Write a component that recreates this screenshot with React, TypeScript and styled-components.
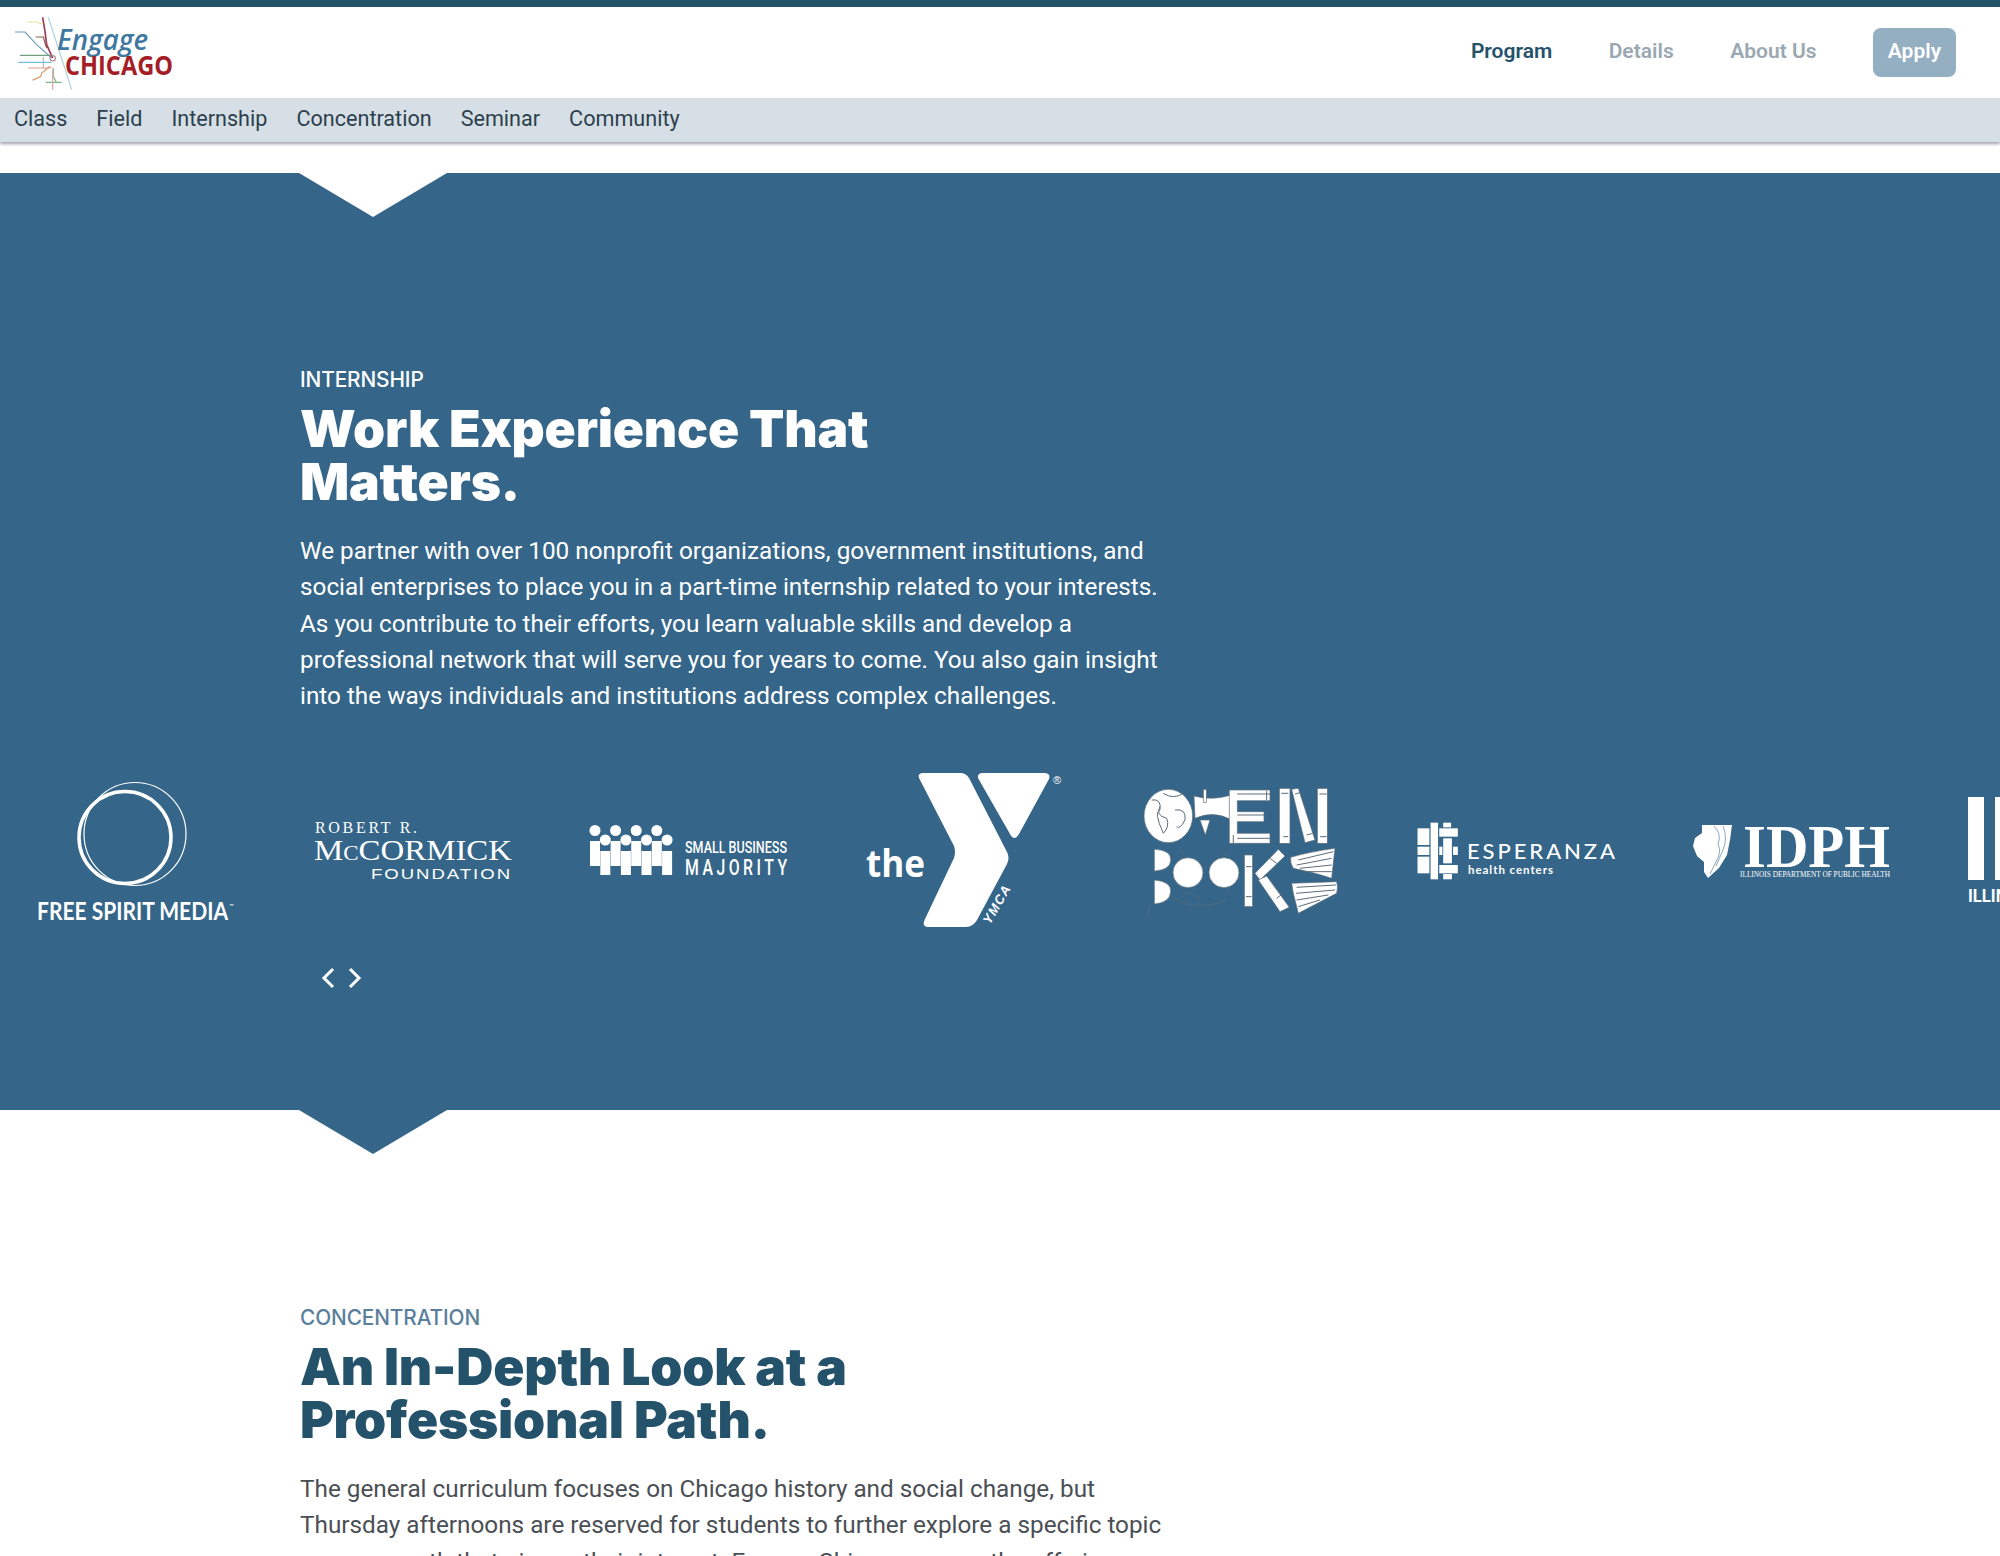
import React from 'react';
import styled, { createGlobalStyle } from 'styled-components';

const GlobalStyle = createGlobalStyle`
  html, body {
    margin: 0;
    padding: 0;
    background: #fff;
    overflow: hidden;
  }
  body {
    font-family: "Inter", "Liberation Sans", sans-serif;
    height: 1556px;
  }
`;

const sections = ['Class', 'Field', 'Internship', 'Concentration', 'Seminar', 'Community'];

const EngageLogo = () => (
  <svg width="176" height="84" viewBox="0 0 176 84">
    <g transform="translate(-12 -15) scale(0.3333)" fill="none" strokeWidth="3.5">
      <path d="M82 72 H110 Q120 76 125 78" stroke="#e8e39a" />
      <path d="M145 58 L215 275" stroke="#a8cfe4" />
      <path d="M45 102 H75 L110 140 L155 180" stroke="#6d9cc0" />
      <path d="M107 117 H130 L135 135 L140 150" stroke="#8b5a50" />
      <path d="M60 172 H155" stroke="#6f9e80" />
      <path d="M55 193 H155" stroke="#6fc0e2" />
      <path d="M85 210 H155" stroke="#e4a89c" />
      <path d="M130 178 V210" stroke="#b5b5b5" />
      <path d="M97 247 L122 236 L125 225 L150 205" stroke="#e09060" />
      <path d="M160 210 V235 L170 255 M137 253 H185" stroke="#7cb88c" />
      <path d="M158 215 V275" stroke="#e0a0b0" />
      <path d="M128 58 L135 100 L140 140 L158 180" stroke="#9c3a58" strokeWidth="5" />
      <circle cx="158" cy="181" r="8" stroke="#b08a90" />
    </g>
    <text x="45" y="37" fontFamily="'Open Sans', sans-serif" fontStyle="italic" fontWeight="600" fontSize="28" fill="#3f78a0" textLength="91" lengthAdjust="spacingAndGlyphs">Engage</text>
    <text x="53" y="62" fontFamily="'Open Sans', sans-serif" fontWeight="700" fontSize="26" fill="#a51e27" textLength="108" lengthAdjust="spacingAndGlyphs">CHICAGO</text>
  </svg>
);

const FreeSpiritLogo = () => (
  <svg width="204" height="142" viewBox="0 0 204 142">
    <g fill="none" stroke="#fff">
      <circle cx="89" cy="58.5" r="46" strokeWidth="3.5" />
      <ellipse cx="99" cy="55" rx="51" ry="51.5" strokeWidth="1.2" />
    </g>
    <text x="1" y="141" fontFamily="'Lato', sans-serif" fontWeight="700" fontSize="25" fill="#fff" textLength="191" lengthAdjust="spacingAndGlyphs">FREE SPIRIT MEDIA</text>
    <text x="193" y="129" fontFamily="'Lato', sans-serif" fontSize="6" fill="#fff">™</text>
  </svg>
);

const McCormickLogo = () => (
  <svg width="204" height="60" viewBox="0 0 204 60" fill="#fff">
    <text x="3" y="13" fontFamily="'Liberation Serif', serif" fontSize="16" textLength="102" lengthAdjust="spacing">ROBERT R.</text>
    <text x="2" y="40" fontFamily="'Liberation Serif', serif" fontSize="30" textLength="198" lengthAdjust="spacingAndGlyphs">M<tspan fontSize="21">C</tspan>CORMICK</text>
    <text x="59" y="59" fontFamily="'Liberation Sans', sans-serif" fontSize="14" letterSpacing="1.5" textLength="141" lengthAdjust="spacingAndGlyphs">FOUNDATION</text>
  </svg>
);

const SmallBusinessLogo = () => (
  <svg width="204" height="50" viewBox="0 0 204 50" fill="#fff">
    {[0, 1, 2, 3].map(i => (
      <g key={i}>
        <circle cx={7 + i * 20.6} cy="5.5" r="5.5" />
        <rect x={2 + i * 20.6} y="16" width="10" height="25" />
        <circle cx={17.3 + i * 20.6} cy="15" r="5.5" />
        <rect x={12.3 + i * 20.6} y="26" width="10" height="24" />
      </g>
    ))}
    <text x="97" y="28" fontFamily="'Roboto', sans-serif" fontWeight="500" fontSize="17" textLength="102" lengthAdjust="spacingAndGlyphs">SMALL BUSINESS</text>
    <text transform="translate(97 50) scale(0.72 1)" fontFamily="'Roboto', sans-serif" fontWeight="500" fontSize="22" textLength="142" lengthAdjust="spacing">MAJORITY</text>
  </svg>
);

const YmcaLogo = () => (
  <svg width="204" height="160" viewBox="0 0 204 160" fill="#fff">
    <text x="2" y="107" fontFamily="'Open Sans', sans-serif" fontWeight="700" fontSize="38" textLength="59" lengthAdjust="spacingAndGlyphs">the</text>
    <path d="M55 8 Q53 3 60 3 H96 Q102 3 105 8 L143 82 Q146 88 143 94 L113 150 Q109 157 102 157 H65 Q57 157 61 149 L90 88 Q92 82 90 76 Z" />
    <path d="M114 8 Q113 3 119 3 H180 Q187 3 185 9 L155 64 Q150 72 146 64 Z" />
    <text transform="translate(126 155) rotate(-60)" fontFamily="'Liberation Sans', sans-serif" fontStyle="italic" fontWeight="700" fontSize="13" textLength="42">YMCA</text>
    <text x="189" y="14" fontFamily="'Liberation Sans', sans-serif" fontSize="11">®</text>
  </svg>
);

const OpenBooksLogo = () => (
  <svg width="204" height="136" viewBox="0 0 204 136">
    <g transform="translate(-20 -12) scale(0.3333)">
      <g fill="#fff" stroke="#5b6b78" strokeWidth="2">
        <ellipse cx="145" cy="138" rx="73" ry="80" />
        <path d="M240 150 H270 L256 195 Z" />
        <path d="M222 78 Q280 95 350 70 L335 150 Q280 120 225 145 Z" />
        <rect x="250" y="58" width="9" height="40" />
        <path d="M328 60 H450 V92 H352 V125 H432 V155 H352 V190 H450 V220 H328 Z" />
        <rect x="478" y="55" width="32" height="165" />
        <path d="M515 58 L535 55 L585 210 L555 218 Z" />
        <rect x="592" y="55" width="30" height="165" />
        <path d="M103 238 Q155 240 152 272 Q150 300 103 303 Z" />
        <path d="M103 330 Q155 335 152 365 Q150 398 103 402 Z" />
        <circle cx="204" cy="308" r="45" />
        <circle cx="312" cy="308" r="45" />
        <rect x="373" y="255" width="25" height="155" />
        <path d="M405 310 L475 238 L495 258 L420 330 Z" />
        <path d="M415 330 L440 318 L508 412 L480 425 Z" />
        <path d="M512 262 Q570 245 645 235 L635 325 Q575 305 520 295 Q510 280 512 262 Z" />
        <path d="M515 340 L650 335 Q655 350 650 370 L535 430 L520 370 Z" />
      </g>
      <g fill="none" stroke="#5b6b78" strokeWidth="3">
        <path d="M95 90 Q125 85 120 120 Q100 125 130 190 Q150 170 140 145 Q105 135 120 110 M165 120 Q200 115 195 150 Q180 180 170 170 M130 70 Q160 90 190 70" />
        <path d="M352 72 H450 M352 135 H432 M352 205 H450 M440 62 V90 M340 195 V220 M490 200 H505 M600 200 H620 M484 70 H505 M598 72 H620 M525 72 L540 68 M560 195 L578 190" />
        <path d="M535 270 L640 245 M530 285 L635 265 M540 295 L635 285 M550 305 L635 305 M530 352 L648 345 M528 370 L645 360 M530 390 L625 375 M535 410 L600 390" />
        <path d="M378 290 H395 M378 380 H395 M450 265 L470 280 M470 385 L490 370" />
        <path d="M90 405 L80 440 M150 375 Q220 430 320 390 M190 375 Q200 360 240 385 M320 370 L330 350 M180 240 L195 260 M325 240 L310 260" opacity="0.75" />
      </g>
    </g>
  </svg>
);

const EsperanzaLogo = () => (
  <svg width="204" height="60" viewBox="0 0 204 60" fill="#fff">
    <g transform="translate(-36 -60) scale(0.395 0.3333)">
      <rect x="95" y="205" width="30" height="50" />
      <rect x="95" y="290" width="30" height="50" />
      <rect x="95" y="260" width="30" height="25" />
      <rect x="128" y="188" width="19" height="170" />
      <rect x="150" y="205" width="47" height="25" />
      <rect x="150" y="315" width="47" height="25" />
      <rect x="150" y="260" width="8" height="25" />
      <rect x="160" y="235" width="22" height="75" />
      <rect x="160" y="188" width="20" height="14" />
      <rect x="160" y="342" width="22" height="16" />
      <rect x="185" y="260" width="12" height="25" />
    </g>
    <text x="51" y="39" fontFamily="'Lato', sans-serif" fontSize="22" fontWeight="500" textLength="148" lengthAdjust="spacing">ESPERANZA</text>
    <text x="52" y="54" fontFamily="'Lato', sans-serif" fontSize="11.5" fontWeight="700" textLength="85" lengthAdjust="spacing">health centers</text>
  </svg>
);

const IdphLogo = () => (
  <svg width="204" height="60" viewBox="0 0 204 60" fill="#fff">
    <path d="M10 5 H40 L38 20 L35 35 L27 48 L16 58 L12 52 L12 42 L5 36 L1 26 L3 18 L10 13 Z" />
    <path d="M22 6 Q30 14 26 24 Q30 32 24 42 L18 54 M31 6 Q36 18 31 30 L24 46" fill="none" stroke="#8fa9bd" strokeWidth="1" />
    <text x="51" y="47" fontFamily="'Liberation Serif', serif" fontWeight="700" fontSize="61" textLength="147" lengthAdjust="spacingAndGlyphs">IDPH</text>
    <text x="48" y="57" fontFamily="'Liberation Serif', serif" fontSize="8" textLength="150" lengthAdjust="spacingAndGlyphs">ILLINOIS DEPARTMENT OF PUBLIC HEALTH</text>
  </svg>
);

const IllinoisLogo = () => (
  <svg width="70" height="106" viewBox="0 0 70 106" fill="#fff">
    <rect x="0" y="0" width="16" height="83" />
    <rect x="27" y="0" width="16" height="83" />
    <text x="0" y="105" fontFamily="'Roboto', sans-serif" fontWeight="700" fontSize="18" textLength="66" lengthAdjust="spacingAndGlyphs">ILLINOIS</text>
  </svg>
);

const logos = [
  <FreeSpiritLogo key="fsm" />,
  <McCormickLogo key="mcc" />,
  <SmallBusinessLogo key="sbm" />,
  <YmcaLogo key="ymca" />,
  <OpenBooksLogo key="books" />,
  <EsperanzaLogo key="esp" />,
  <IdphLogo key="idph" />,
  <IllinoisLogo key="ill" />,
];

const Chevron = ({ d }: { d: string }) => (
  <svg width="14" height="22" viewBox="0 0 14 22" fill="none" stroke="#fff" strokeWidth="3">
    <path d={d} />
  </svg>
);

export default function App() {
  return (
    <Page>
      <GlobalStyle />
      <Header>
        <Brand>
          <EngageLogo />
        </Brand>
        <MainNav>
          <NavLink $active>Program</NavLink>
          <NavLink>Details</NavLink>
          <NavLink>About Us</NavLink>
          <ApplyButton>Apply</ApplyButton>
        </MainNav>
      </Header>
      <SubNav>
        {sections.map(s => (
          <SubNavLink key={s}>{s}</SubNavLink>
        ))}
      </SubNav>

      <BlueSection>
        <NotchDown />
        <Copy>
          <Eyebrow>INTERNSHIP</Eyebrow>
          <Title>Work Experience That Matters.</Title>
          <Body>
            We partner with over 100 nonprofit organizations, government institutions, and social
            enterprises to place you in a part-time internship related to your interests. As you
            contribute to their efforts, you learn valuable skills and develop a professional
            network that will serve you for years to come. You also gain insight into the ways
            individuals and institutions address complex challenges.
          </Body>
        </Copy>
        <Carousel>
          {logos.map(l => (
            <LogoCell key={l.key}>{l}</LogoCell>
          ))}
        </Carousel>
        <Arrows>
          <Chevron d="M12 2 L3 11 L12 20" />
          <Chevron d="M2 2 L11 11 L2 20" />
        </Arrows>
        <NotchBelow />
      </BlueSection>

      <WhiteSection>
        <Copy>
          <Eyebrow $dark>CONCENTRATION</Eyebrow>
          <Title $dark>An In-Depth Look at a Professional Path.</Title>
          <Body $dark>
            The general curriculum focuses on Chicago history and social change, but Thursday
            afternoons are reserved for students to further explore a specific topic or career
            path that piques their interest. Engage Chicago covers the offerings
          </Body>
        </Copy>
      </WhiteSection>
    </Page>
  );
}

const Page = styled.div`
  height: 1556px;
  overflow: hidden;
  border-top: 7px solid #24526b;
`;

const Header = styled.header`
  height: 91px;
  display: flex;
  align-items: center;
  justify-content: space-between;
  padding: 0 44px 0 12px;
`;

const Brand = styled.div`
  display: flex;
  margin-top: 5px;
`;

const MainNav = styled.nav`
  display: flex;
  align-items: center;
  gap: 56.5px;
`;

const NavLink = styled.a<{ $active?: boolean }>`
  font-family: "Roboto", sans-serif;
  font-size: 21px;
  font-weight: 600;
  padding-bottom: 3px;
  color: ${p => (p.$active ? '#24526b' : '#9aa8b2')};
`;

const ApplyButton = styled.a`
  font-family: "Roboto", sans-serif;
  font-size: 21px;
  font-weight: 600;
  color: #fff;
  background: #94aec2;
  border-radius: 8px;
  width: 83px;
  height: 49px;
  box-sizing: border-box;
  padding-bottom: 3px;
  display: flex;
  align-items: center;
  justify-content: center;
`;

const SubNav = styled.nav`
  height: 44px;
  box-sizing: border-box;
  padding: 0 14px 3px;
  display: flex;
  align-items: center;
  gap: 29px;
  background: #d5dfe5;
  box-shadow: 0 2px 3px rgba(60, 70, 100, 0.5);
`;

const SubNavLink = styled.a`
  font-family: "Roboto", sans-serif;
  font-size: 21.6px;
  color: #2d3f4e;
`;

const BlueSection = styled.section`
  position: relative;
  margin-top: 31px;
  height: 937px;
  background: #356689;
  padding-top: 192px;
  box-sizing: border-box;
`;

const NotchDown = styled.div`
  position: absolute;
  top: 0;
  left: 299px;
  width: 148px;
  height: 44px;
  background: #fff;
  clip-path: polygon(0 0, 100% 0, 50% 100%);
`;

const NotchBelow = styled.div`
  position: absolute;
  top: 100%;
  left: 299px;
  width: 148px;
  height: 44px;
  background: #356689;
  clip-path: polygon(0 0, 100% 0, 50% 100%);
`;

const Copy = styled.div`
  margin-left: 300px;
  width: 874px;
`;

const Eyebrow = styled.div<{ $dark?: boolean }>`
  font-family: "Inter", sans-serif;
  font-size: 20.8px;
  line-height: 30px;
  font-weight: 500;
  letter-spacing: -0.1px;
  color: ${p => (p.$dark ? '#5a7f9c' : '#fff')};
`;

const Title = styled.h2<{ $dark?: boolean }>`
  margin: 7px 0 0;
  width: 640px;
  font-family: "Inter", sans-serif;
  font-size: 51.5px;
  line-height: 53px;
  font-weight: 900;
  letter-spacing: -0.2px;
  color: ${p => (p.$dark ? '#24526b' : '#fff')};
`;

const Body = styled.p<{ $dark?: boolean }>`
  margin: 25px 0 0;
  font-family: "Roboto", sans-serif;
  font-size: 24.3px;
  line-height: 36.3px;
  color: ${p => (p.$dark ? '#4a4f55' : '#fff')};
`;

const Carousel = styled.div`
  display: grid;
  grid-template-columns: repeat(8, 204px);
  column-gap: 72px;
  align-items: center;
  height: 160px;
  margin: 56px 0 0 36px;
`;

const LogoCell = styled.div`
  display: flex;
  align-items: center;
`;

const Arrows = styled.div`
  display: flex;
  gap: 13px;
  margin: 37px 0 0 321px;

  svg {
    display: block;
  }
`;

const WhiteSection = styled.section`
  padding-top: 193px;
`;
